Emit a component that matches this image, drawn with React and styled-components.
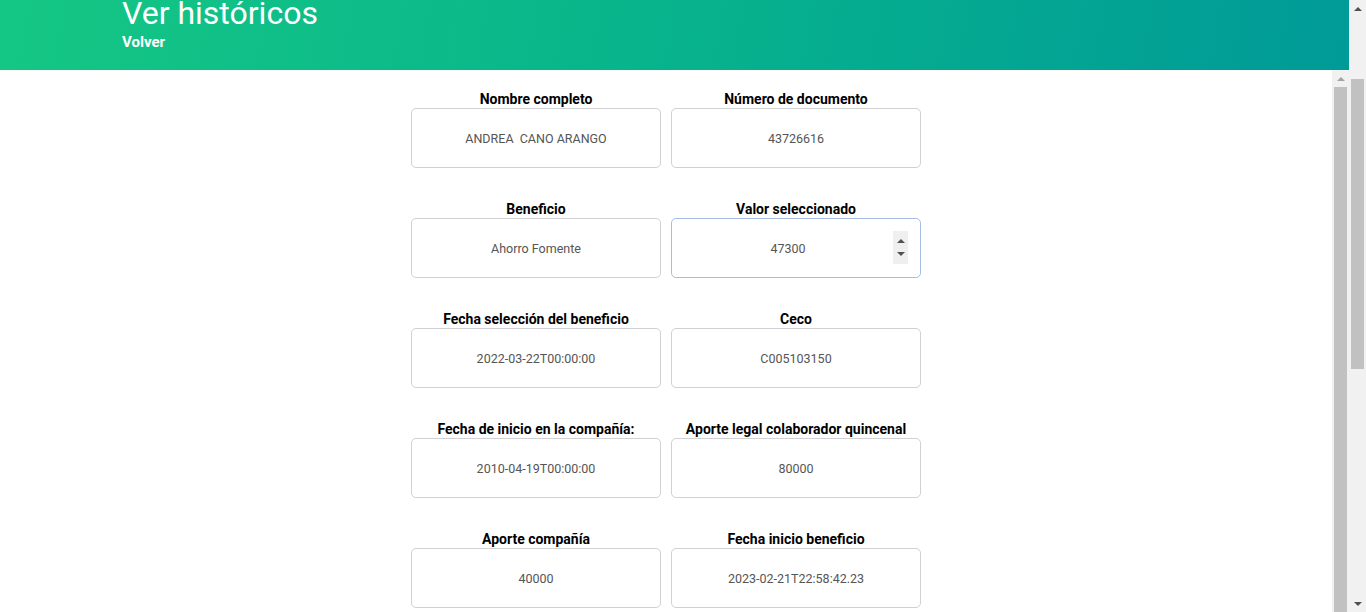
import React from 'react';
import styled, { createGlobalStyle } from 'styled-components';

const GlobalStyle = createGlobalStyle`
  html, body {
    margin: 0;
    height: 100%;
    overflow: hidden;
  }
  body {
    font-family: Roboto, "Liberation Sans", Arial, sans-serif;
    background: #fff;
  }
`;

// layout shell: page column + page scrollbar
const Shell = styled.div`
  display: flex;
  height: 100vh;
`;

const Column = styled.div`
  flex: 1;
  min-width: 0;
  display: flex;
  flex-direction: column;
`;

const Header = styled.header`
  flex: none;
  height: 70px;
  box-sizing: border-box;
  padding-left: 122px;
  color: #fff;
  background: linear-gradient(100deg, #15c784 0%, #07b38c 50%, #009a98 100%);
  overflow: hidden;
`;

const Title = styled.h1`
  margin: -3px 0 0;
  font-size: 32px;
  line-height: 32px;
  font-weight: 400;
`;

const Back = styled.a`
  display: inline-block;
  margin-top: 5px;
  font-size: 15px;
  font-weight: 700;
  line-height: 17px;
  color: #fff;
  cursor: pointer;
`;

const Body = styled.div`
  flex: 1;
  min-height: 0;
  display: flex;
`;

const Content = styled.main`
  flex: 1;
  overflow: hidden;
  padding-top: 22px;
`;

const Grid = styled.div`
  display: grid;
  grid-template-columns: repeat(2, 250px);
  column-gap: 10px;
  row-gap: 34px;
  justify-content: center;
`;

const Field = styled.label`
  display: flex;
  flex-direction: column;
`;

const Label = styled.span`
  font-size: 14px;
  line-height: 14px;
  margin-bottom: 2px;
  font-weight: 700;
  color: #000;
  text-align: center;
  white-space: nowrap;
`;

const InputWrap = styled.div`
  position: relative;
`;

const Input = styled.input`
  box-sizing: border-box;
  width: 250px;
  height: 60px;
  border: 1px solid ${({ $focus }) => ($focus ? '#a7bde6' : '#d0d0d5')};
  border-radius: 5px;
  padding: 0 ${({ $spin }) => ($spin ? '28px' : '12px')} 0 12px;
  font-family: Roboto, "Liberation Sans", Arial, sans-serif;
  font-size: 12.5px;
  color: #555;
  text-align: center;
  background: #fff;
  outline: none;
`;

const Spinner = styled.div`
  position: absolute;
  top: 13px;
  right: 13px;
  width: 15px;
  height: 33px;
  background: #efefef;
  display: flex;
  flex-direction: column;
  align-items: center;
  justify-content: space-around;
  padding: 3px 0;
  box-sizing: border-box;
`;

const Tri = styled.span`
  width: 0;
  height: 0;
  border-left: ${({ $size }) => $size}px solid transparent;
  border-right: ${({ $size }) => $size}px solid transparent;
  ${({ $dir, $size, $color }) =>
    $dir === 'up'
      ? `border-bottom: ${$size}px solid ${$color};`
      : `border-top: ${$size}px solid ${$color};`}
`;

// scrollbar look-alikes (the browser's own are hidden in the capture)
const Rail = styled.div`
  flex: none;
  width: 17px;
  display: flex;
  flex-direction: column;
  background: #f1f1f1;
`;

const RailButton = styled.div`
  flex: none;
  height: 17px;
  display: flex;
  align-items: center;
  justify-content: center;
`;

const Track = styled.div`
  flex: 1;
  min-height: 0;
  display: flex;
  flex-direction: column;
  align-items: center;
`;

const Thumb = styled.div`
  width: 13px;
  background: #c1c1c1;
  margin-top: ${({ $offset }) => $offset}px;
  ${({ $length }) => ($length ? `height: ${$length}px;` : 'flex: 1;')}
`;

const fields = [
  { label: 'Nombre completo', value: 'ANDREA  CANO ARANGO' },
  { label: 'Número de documento', value: '43726616' },
  { label: 'Beneficio', value: 'Ahorro Fomente' },
  { label: 'Valor seleccionado', value: '47300', spin: true },
  { label: 'Fecha selección del beneficio', value: '2022-03-22T00:00:00' },
  { label: 'Ceco', value: 'C005103150' },
  { label: 'Fecha de inicio en la compañía:', value: '2010-04-19T00:00:00' },
  { label: 'Aporte legal colaborador quincenal', value: '80000' },
  { label: 'Aporte compañía', value: '40000' },
  { label: 'Fecha inicio beneficio', value: '2023-02-21T22:58:42.23' },
];

export default function App() {
  return (
    <Shell>
      <GlobalStyle />
      <Column>
        <Header>
          <Title>Ver históricos</Title>
          <Back>Volver</Back>
        </Header>
        <Body>
          <Content>
            <Grid>
              {fields.map((f) => (
                <Field key={f.label}>
                  <Label>{f.label}</Label>
                  <InputWrap>
                    <Input
                      type="text"
                      inputMode={f.spin ? 'numeric' : undefined}
                      defaultValue={f.value}
                      readOnly={!f.spin}
                      $focus={f.spin}
                      $spin={f.spin}
                    />
                    {f.spin && (
                      <Spinner>
                        <Tri $dir="up" $size={4} $color="#505050" />
                        <Tri $dir="down" $size={4} $color="#505050" />
                      </Spinner>
                    )}
                  </InputWrap>
                </Field>
              ))}
            </Grid>
          </Content>
          <Rail>
            <RailButton>
              <Tri $dir="up" $size={4} $color="#a3a3a3" />
            </RailButton>
            <Track>
              <Thumb $offset={0} />
            </Track>
          </Rail>
        </Body>
      </Column>
      <Rail>
        <RailButton>
          <Tri $dir="up" $size={4} $color="#505050" />
        </RailButton>
        <Track>
          <Thumb $offset={62} $length={290} />
        </Track>
        <RailButton>
          <Tri $dir="down" $size={4} $color="#505050" />
        </RailButton>
      </Rail>
    </Shell>
  );
}
